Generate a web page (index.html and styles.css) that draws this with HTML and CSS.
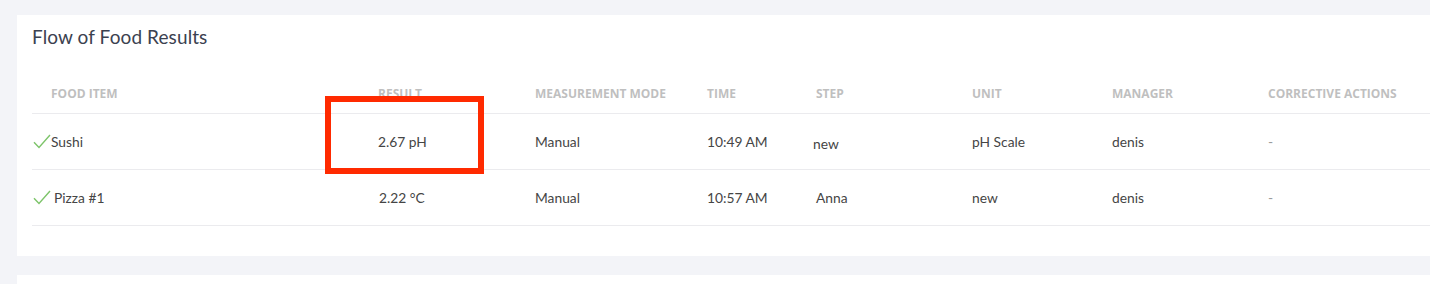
FILE: index.html
```html
<!DOCTYPE html>
<html>
<head>
<meta charset="utf-8">
<link rel="stylesheet" href="styles.css">
</head>
<body>
<div class="page">
  <section class="card">
    <h2 class="title">Flow of Food Results</h2>
    <div class="table">
      <div class="row head">
        <div class="cell first">Food Item</div>
        <div class="cell">Result</div>
        <div class="cell">Measurement Mode</div>
        <div class="cell">Time</div>
        <div class="cell">Step</div>
        <div class="cell">Unit</div>
        <div class="cell">Manager</div>
        <div class="cell">Corrective Actions</div>
      </div>
      <div class="row">
        <div class="cell item"><svg class="check" width="18" height="15" viewBox="0 0 18 15"><path d="M1 8.2 L6 13.5 L17 1" fill="none" stroke="#7dc46a" stroke-width="1.4"/></svg>Sushi</div>
        <div class="cell result">
          <span>2.67 pH</span>
          <span class="highlight"></span>
        </div>
        <div class="cell">Manual</div>
        <div class="cell">10:49 AM</div>
        <div class="cell step-new">new</div>
        <div class="cell">pH Scale</div>
        <div class="cell">denis</div>
        <div class="cell dash">-</div>
      </div>
      <div class="row">
        <div class="cell item"><svg class="check" width="18" height="15" viewBox="0 0 18 15"><path d="M1 8.2 L6 13.5 L17 1" fill="none" stroke="#7dc46a" stroke-width="1.4"/></svg><span class="pizza">Pizza #1</span></div>
        <div class="cell"><span class="r2">2.22 °C</span></div>
        <div class="cell">Manual</div>
        <div class="cell">10:57 AM</div>
        <div class="cell">Anna</div>
        <div class="cell">new</div>
        <div class="cell">denis</div>
        <div class="cell dash">-</div>
      </div>
    </div>
  </section>
  <section class="card next"></section>
</div>
</body>
</html>
```

FILE: styles.css
```css
* { box-sizing: border-box; }
html, body { margin: 0; padding: 0; }
body {
  background: #f3f4f8;
  font-family: Lato, "Open Sans", Arial, sans-serif;
  color: #4a4a4a;
  width: 1430px;
  height: 284px;
  overflow: hidden;
}
.page {
  padding: 15px 0 0 17px;
  display: flex;
  flex-direction: column;
  gap: 19px;
}
.card {
  background: #fff;
  padding: 10px 0 30px 15px;
  height: 241px;
}
.card.next { height: 9px; padding: 0; }
.title {
  margin: 0 0 24px 0;
  font-size: 19px;
  line-height: 24px;
  font-weight: 400;
  color: #3b4150;
  letter-spacing: 0.1px;
}
.table { display: flex; flex-direction: column; }
.row {
  display: grid;
  grid-template-columns: 346px 157px 172px 109px 156px 140px 156px 1fr;
  align-items: center;
  height: 56px;
  border-bottom: 1px solid #ebebee;
  font-size: 13.8px;
  color: #454545;
}
.row.head {
  height: 41px;
  font-family: "Open Sans", Lato, sans-serif;
  font-size: 12px;
  font-weight: 700;
  text-transform: uppercase;
  color: #bfbfbf;
  letter-spacing: 0px;
}
.cell { position: relative; white-space: nowrap; }
.cell.first { padding-left: 19px; }
.item { display: flex; align-items: center; gap: 0; padding-left: 1px; }
.check { margin-top: -1px; }
.pizza { margin-left: 3px; }
.result { height: 100%; display: flex; align-items: center; }
.highlight {
  position: absolute;
  left: -53px;
  top: -18px;
  width: 159px;
  height: 78px;
  border: 6px solid #ff2a00;
  pointer-events: none;
}
.r2 { margin-left: 1px; }
.step-new { margin-left: -3px; padding-top: 4px; }
.dash { color: #9a9a9a; }
```
